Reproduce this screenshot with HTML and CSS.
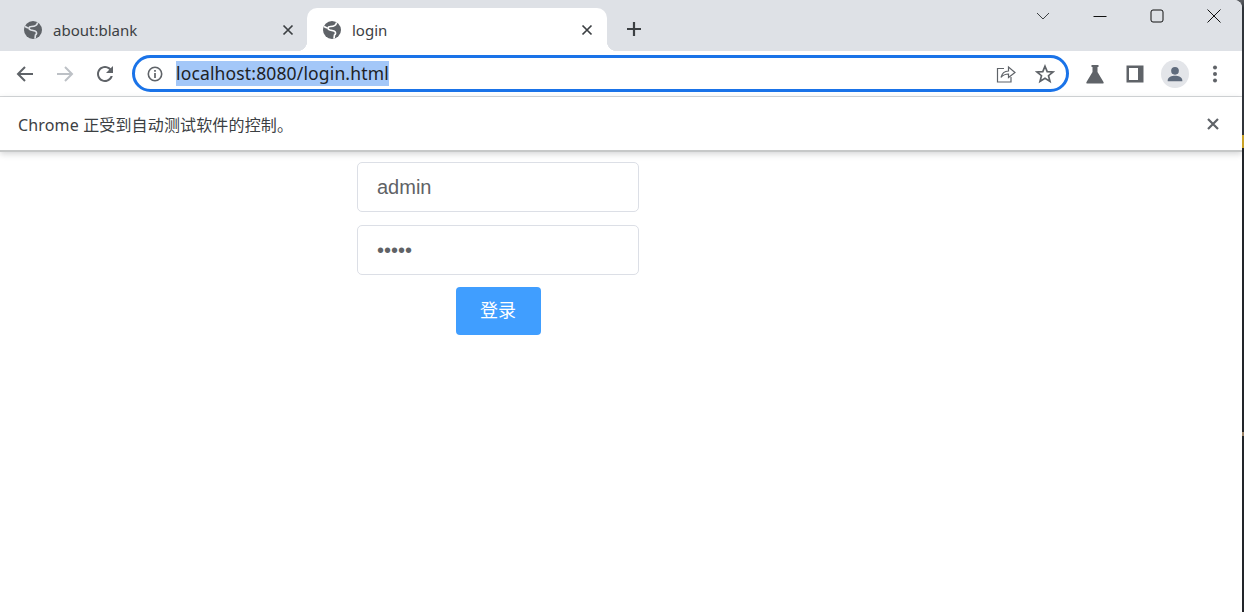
FILE: index.html
```html
<!DOCTYPE html>
<html lang="en">
<head>
  <meta charset="UTF-8">
  <meta name="viewport" content="width=device-width, initial-scale=1.0">
  <title>login</title>
  <link rel="stylesheet" href="styles.css">
</head>
<body>

<div class="window">
  <div class="tabstrip">
    <div class="tab">
      <svg class="favicon" viewBox="0 0 18 18"><circle cx="9" cy="9" r="9" fill="#5f6368"/><path d="M13.5 1.5 C13 5 10 5.5 7.5 5.5 C4.5 5.5 4 8 7 9 L11 10 C13.5 11 12.5 13.5 11.5 14 L11 17.5 M1 5.5 L4 7" fill="none" stroke="#dee1e6" stroke-width="1.7"/></svg>
      <span class="tab-title">about:blank</span>
      <svg class="tab-close" viewBox="0 0 12 12"><path d="M1.5 1.5 L10.5 10.5 M10.5 1.5 L1.5 10.5" stroke="#3c4043" stroke-width="1.7"/></svg>
    </div>
    <div class="tab active">
      <svg class="favicon" viewBox="0 0 18 18"><circle cx="9" cy="9" r="9" fill="#5f6368"/><path d="M13.5 1.5 C13 5 10 5.5 7.5 5.5 C4.5 5.5 4 8 7 9 L11 10 C13.5 11 12.5 13.5 11.5 14 L11 17.5 M1 5.5 L4 7" fill="none" stroke="#fff" stroke-width="1.7"/></svg>
      <span class="tab-title">login</span>
      <svg class="tab-close" viewBox="0 0 12 12"><path d="M1.5 1.5 L10.5 10.5 M10.5 1.5 L1.5 10.5" stroke="#3c4043" stroke-width="1.7"/></svg>
    </div>
    <svg class="new-tab" viewBox="0 0 16 16"><path d="M8 1 V15 M1 8 H15" stroke="#3c4043" stroke-width="2.2"/></svg>
    <div class="win-controls">
      <span class="win-btn"><svg viewBox="0 0 14 14"><path d="M1 4 L7 10 L13 4" fill="none" stroke="#3c4043" stroke-width="1"/></svg></span>
      <span class="win-btn"><svg viewBox="0 0 14 14"><path d="M0.5 7.5 H13.5" stroke="#111" stroke-width="1"/></svg></span>
      <span class="win-btn"><svg viewBox="0 0 14 14"><rect x="1" y="1" width="12" height="12" rx="2" fill="none" stroke="#111" stroke-width="1"/></svg></span>
      <span class="win-btn"><svg viewBox="0 0 14 14"><path d="M0.5 0.5 L13.5 13.5 M13.5 0.5 L0.5 13.5" stroke="#111" stroke-width="1"/></svg></span>
    </div>
  </div>

  <div class="toolbar">
    <span class="tool"><svg viewBox="0 0 24 24"><path d="M20 12 H5 M12 5 L5 12 L12 19" fill="none" stroke="#5f6368" stroke-width="2"/></svg></span>
    <span class="tool"><svg viewBox="0 0 24 24"><path d="M4 12 H19 M12 5 L19 12 L12 19" fill="none" stroke="#bdc1c6" stroke-width="2"/></svg></span>
    <span class="tool"><svg viewBox="0 0 24 24"><path fill="#5f6368" d="M17.65 6.35C16.2 4.9 14.21 4 12 4c-4.42 0-7.99 3.58-7.99 8s3.57 8 7.99 8c3.73 0 6.84-2.55 7.73-6h-2.08c-.82 2.33-3.04 4-5.65 4-3.31 0-6-2.69-6-6s2.69-6 6-6c1.66 0 3.14.69 4.22 1.78L13 11h7V4l-2.35 2.35z"/></svg></span>

    <div class="omnibox">
      <svg class="info-icon" viewBox="0 0 16 16"><circle cx="8" cy="8" r="6.7" fill="none" stroke="#5f6368" stroke-width="1.6"/><path d="M8 7 V12 M8 4 V5.8" stroke="#5f6368" stroke-width="1.7"/></svg>
      <span class="url">localhost:8080/login.html</span>
      <svg class="omni-icon" viewBox="0 0 20 20"><path d="M8 4.5 H1.5 V18 H15 V13 M5 13.5 C6 9 9.5 7 12.5 7 V3 L19 8.5 L12.5 13.5 V10 C9.5 10 7 11 5 13.5 Z" fill="none" stroke="#5f6368" stroke-width="1.2"/></svg>
      <svg class="omni-icon star" viewBox="0 0 20 20"><path d="M10 2.2 L12.2 7.6 L18 8 L13.5 11.7 L15 17.4 L10 14.3 L5 17.4 L6.5 11.7 L2 8 L7.8 7.6 Z" fill="none" stroke="#5f6368" stroke-width="1.7"/></svg>
    </div>

    <span class="tool"><svg viewBox="0 0 24 24"><path fill="#5f6368" d="M8.5 3 H15.5 V5 H14.5 V10 L20.5 20 C21 21 20.5 21.5 19.5 21.5 H4.5 C3.5 21.5 3 21 3.5 20 L9.5 10 V5 H8.5 Z"/></svg></span>
    <span class="tool"><svg viewBox="0 0 24 24"><path fill="#5f6368" fill-rule="evenodd" d="M3.5 3.5 H20.5 V20.5 H3.5 Z M6 6 V18 H15 V6 Z"/></svg></span>
    <span class="tool"><span class="avatar"><svg viewBox="0 0 24 24"><circle cx="12" cy="8.5" r="4.2" fill="#5f6b7c"/><path fill="#5f6b7c" d="M4 19 C4 15.5 8.5 14 12 14 C15.5 14 20 15.5 20 19 V20 H4 Z"/></svg></span></span>
    <span class="tool"><svg viewBox="0 0 24 24"><circle cx="12" cy="5.5" r="2" fill="#5f6368"/><circle cx="12" cy="12" r="2" fill="#5f6368"/><circle cx="12" cy="18.5" r="2" fill="#5f6368"/></svg></span>
  </div>

  <div class="infobar">
    <span class="info-text">Chrome 正受到自动测试软件的控制。</span>
    <svg class="info-close" viewBox="0 0 12 12"><path d="M1 1 L11 11 M11 1 L1 11" stroke="#5f6368" stroke-width="2.2"/></svg>
  </div>

  <div class="page">
    <form class="login-form">
      <input class="field" type="text" value="admin">
      <input class="field" type="password" value="admin">
      <button class="login-btn" type="button">登录</button>
    </form>
  </div>
</div>
<div class="desktop-edge"></div>

</body>
</html>
```

FILE: styles.css
```css
html, body {
  margin: 0;
  height: 612px;
  overflow: hidden;
}

body {
  display: flex;
  background: #5a5d62;
  font-family: "Noto Sans", "Noto Sans CJK SC", sans-serif;
}

.window {
  flex: 1;
  display: flex;
  flex-direction: column;
  min-width: 0;
  background: #fff;
  border-top-right-radius: 8px;
  overflow: hidden;
}

.desktop-edge {
  width: 2px;
  background: linear-gradient(#5a5d62 0, #30343a 8px, #30343a 135px, #c9a227 135px, #c9a227 148px, #22252a 148px, #22252a 432px, #9c8468 432px, #9c8468 436px, #22252a 436px);
}

/* tab strip */
.tabstrip {
  height: 43px;
  padding-top: 8px;
  display: flex;
  align-items: stretch;
  background: #dee1e6;
}

.tab {
  position: relative;
  box-sizing: border-box;
  width: 300px;
  padding: 0 14px 0 16px;
  display: flex;
  align-items: center;
  font-size: 15px;
  color: #3c4043;
}

.tab:first-child {
  width: 307px;
  padding: 0 13px 0 24px;
}

.tab.active {
  background: #fff;
  border-radius: 10px 10px 0 0;
}

.tab.active::before,
.tab.active::after {
  content: "";
  position: absolute;
  bottom: 0;
  width: 10px;
  height: 10px;
}

.tab.active::before {
  left: -10px;
  background: radial-gradient(circle at 0 0, #dee1e6 10px, #fff 10.5px);
}

.tab.active::after {
  right: -10px;
  background: radial-gradient(circle at 100% 0, #dee1e6 10px, #fff 10.5px);
}

.favicon {
  width: 18px;
  height: 18px;
  flex: none;
}

.tab-title {
  flex: 1;
  margin-left: 11px;
}

.tab-close {
  width: 12px;
  height: 12px;
  flex: none;
}

.new-tab {
  width: 16px;
  height: 16px;
  margin: 13px 0 0 19px;
  flex: none;
}

.win-controls {
  margin: -8px 0 0 auto;
  display: flex;
  height: 32px;
}

.win-btn {
  width: 57px;
  display: flex;
  align-items: center;
  justify-content: center;
}

.win-btn svg {
  width: 14px;
  height: 14px;
}

/* toolbar */
.toolbar {
  height: 46px;
  box-sizing: border-box;
  padding: 0 7px 0 5px;
  display: flex;
  align-items: center;
  background: #fff;
  border-bottom: 1px solid #d6d8da;
}

.tool {
  width: 40px;
  flex: none;
  display: flex;
  align-items: center;
  justify-content: center;
}

.tool svg {
  width: 24px;
  height: 24px;
}

.avatar {
  width: 28px;
  height: 28px;
  border-radius: 50%;
  background: #e3e5e9;
  display: flex;
  align-items: center;
  justify-content: center;
}

.avatar svg {
  width: 22px;
  height: 22px;
}

.omnibox {
  flex: 1;
  height: 37px;
  margin: 0 6px 0 7px;
  box-sizing: border-box;
  padding: 0 11px 0 12px;
  display: flex;
  align-items: center;
  border: 3px solid #1a73e8;
  border-radius: 19px;
}

.info-icon {
  width: 16px;
  height: 16px;
  flex: none;
}

.url {
  margin-left: 13px;
  margin-right: auto;
  height: 25px;
  line-height: 25px;
  font-size: 17.5px;
  letter-spacing: 0.15px;
  color: #202124;
  background: #a3c7f8;
  white-space: nowrap;
}

.omni-icon {
  width: 20px;
  height: 20px;
  flex: none;
}

.omni-icon.star {
  margin-left: 19px;
}

/* infobar */
.infobar {
  position: relative;
  height: 55px;
  box-sizing: border-box;
  padding: 0 23px 0 18px;
  display: flex;
  align-items: center;
  justify-content: space-between;
  background: #fff;
  border-bottom: 2px solid #c6c8c8;
  box-shadow: 0 2px 6px rgba(60, 64, 67, 0.22);
}

.info-text {
  font-size: 16px;
  letter-spacing: 0.15px;
  color: #3c4043;
}

.info-close {
  width: 12px;
  height: 12px;
}

/* page */
.page {
  flex: 1;
  padding: 10px 0 0 357px;
}

.login-form {
  width: 282px;
  display: flex;
  flex-direction: column;
  align-items: center;
}

.field {
  width: 100%;
  height: 50px;
  box-sizing: border-box;
  margin-bottom: 13px;
  padding: 0 19px;
  border: 1px solid #dcdfe6;
  border-radius: 5px;
  outline: none;
  font-family: "Liberation Sans", Arial, sans-serif;
  font-size: 20px;
  color: #606266;
}

.login-btn {
  width: 85px;
  height: 48px;
  margin-top: -1px;
  padding: 0 0 4px;
  border: 0;
  border-radius: 4px;
  background: #409eff;
  color: #fff;
  font-family: "Liberation Sans", "Noto Sans CJK SC", sans-serif;
  font-size: 18px;
}
```
